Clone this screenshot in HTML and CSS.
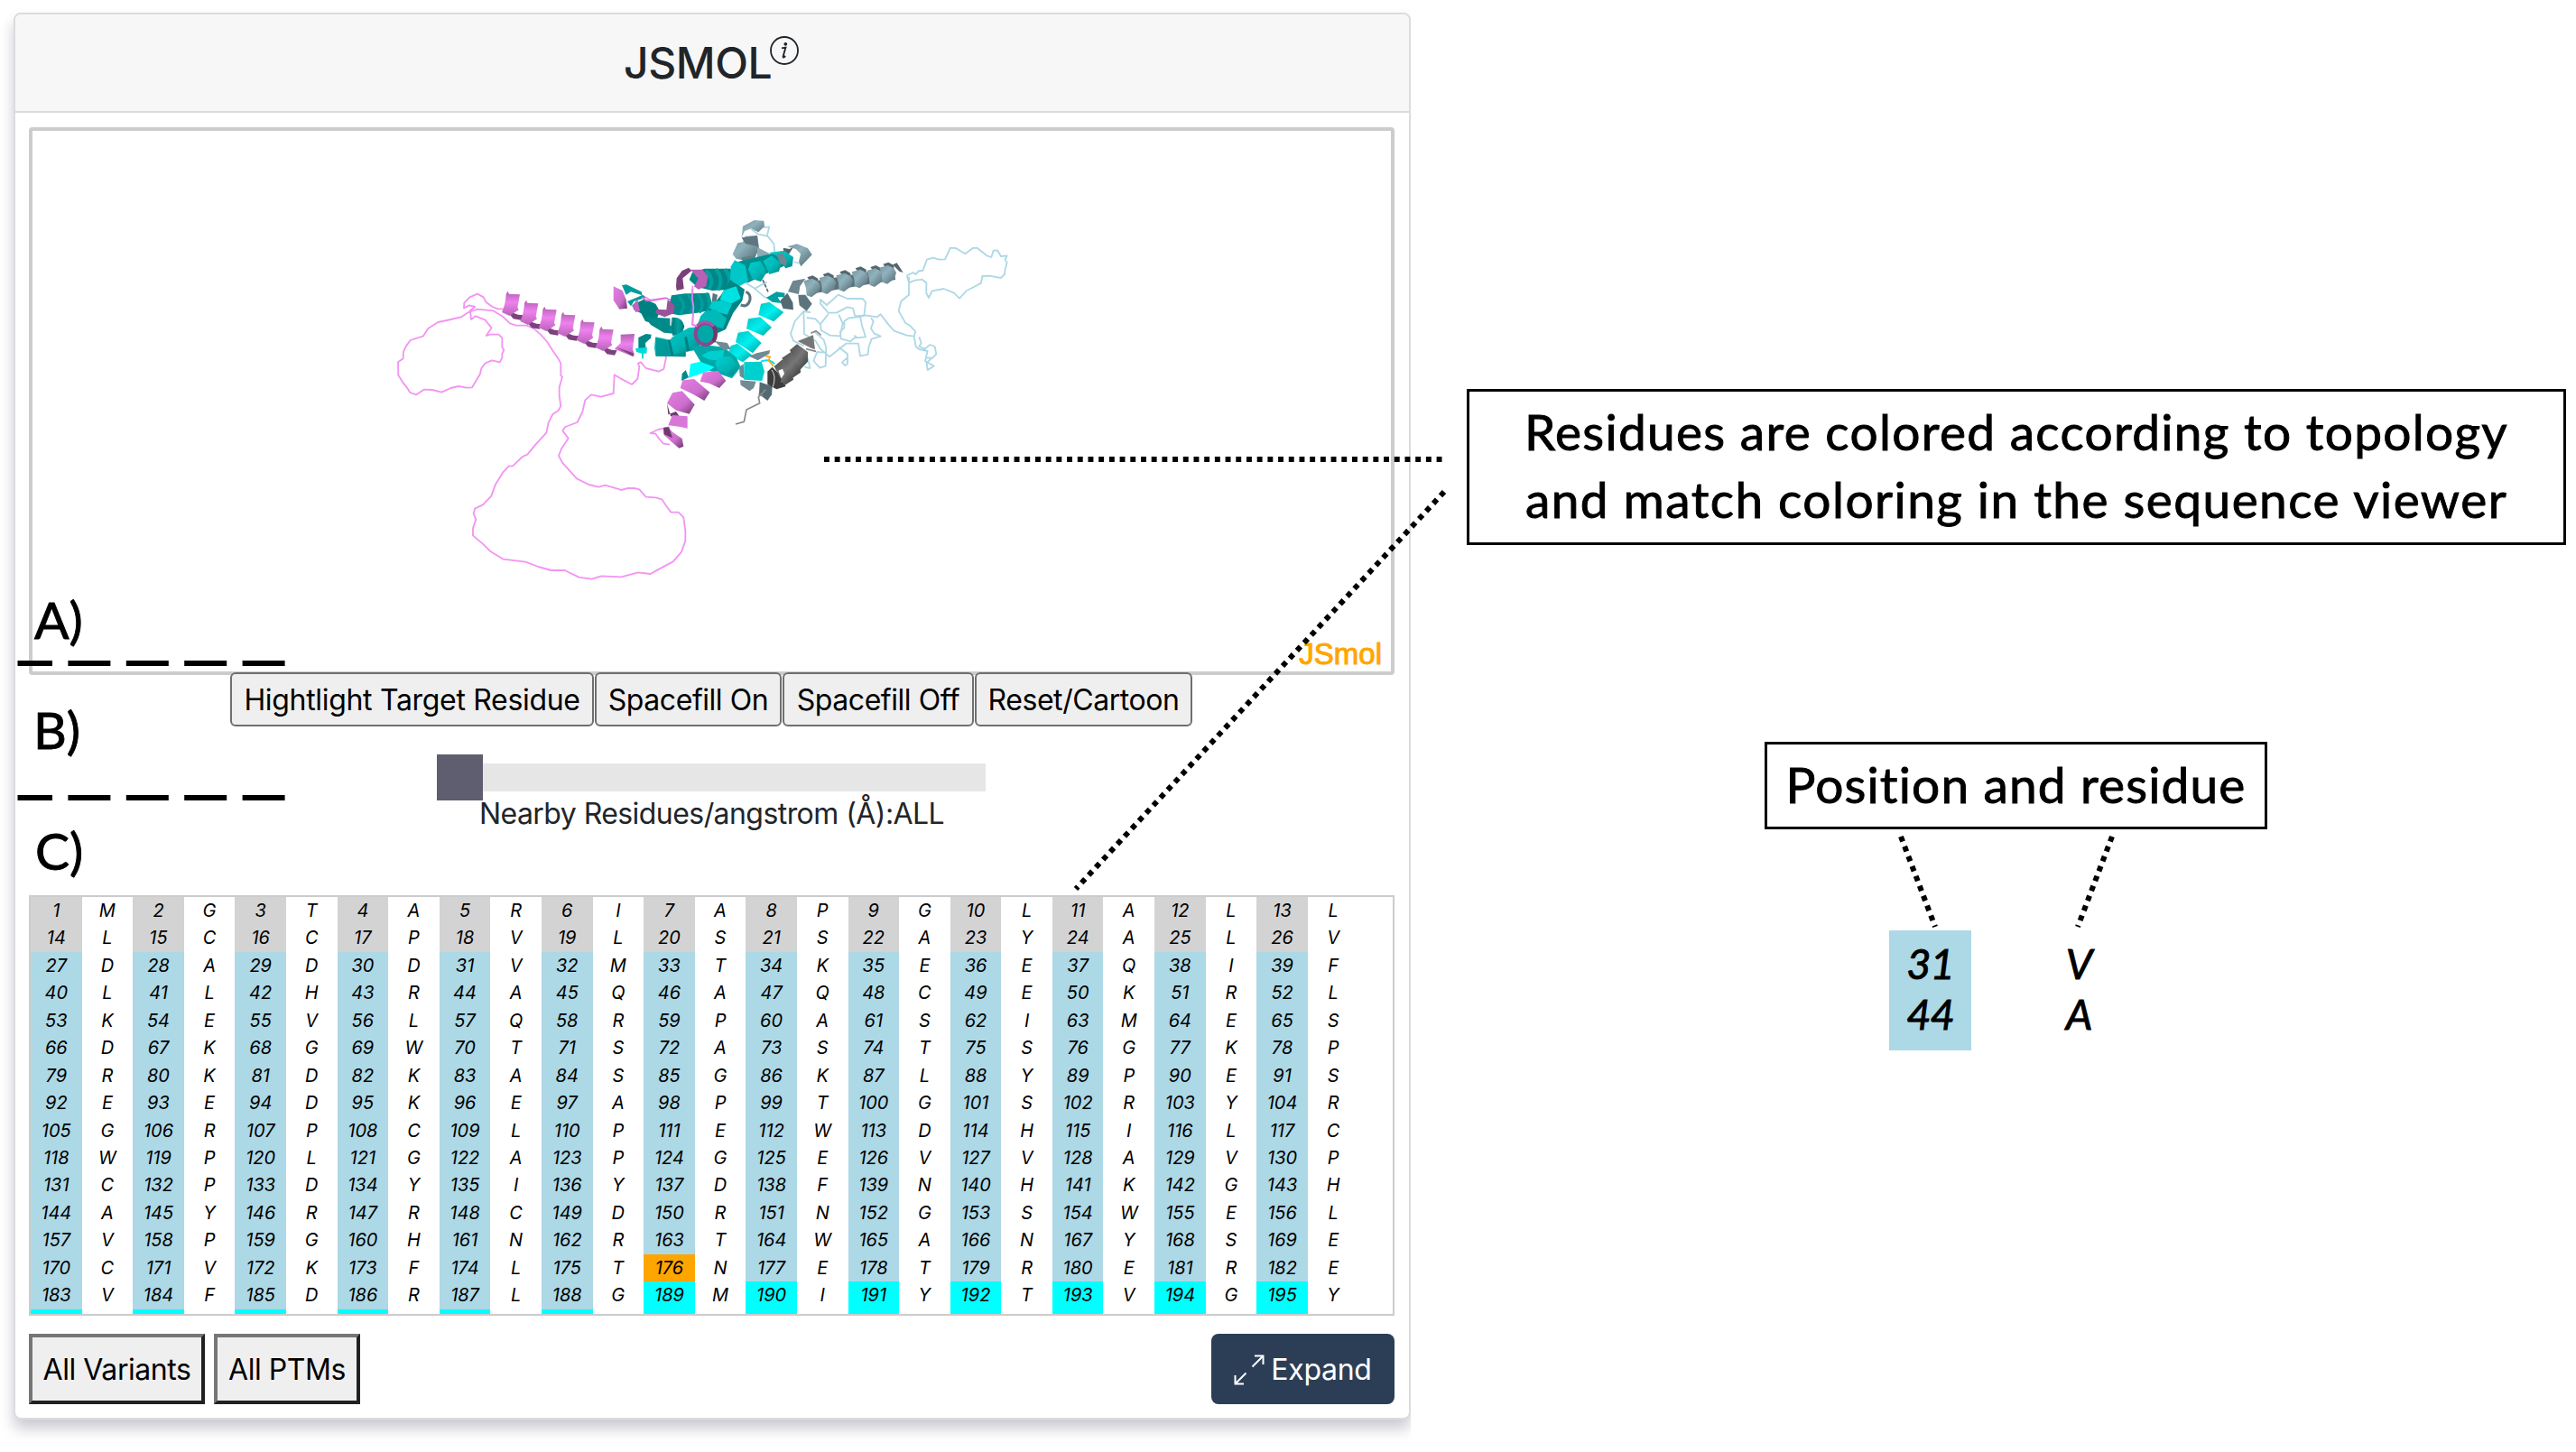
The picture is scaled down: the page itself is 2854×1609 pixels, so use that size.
FILE: index.html
```html
<!DOCTYPE html>
<html lang="en">
<head>
<meta charset="utf-8">
<title>JSMOL viewer</title>
<link rel="stylesheet" href="styles.css">
</head>
<body>
<main class="figure">
  <div class="panel-wrap">
    <section class="card">
      <header class="card-header">
        <h1 class="title">JSMOL</h1>
        <svg class="info" viewBox="0 0 32 32"><circle cx="16" cy="16" r="15" fill="none" stroke="#212529" stroke-width="1.8"/><circle cx="17.3" cy="8.8" r="1.9" fill="#212529"/><path d="M13 13.4 L17.4 12.6 L14.6 22.6 Q14.4 24 15.6 23.4 L17.2 22" fill="none" stroke="#212529" stroke-width="1.9"/></svg>
      </header>
      <div class="card-body">
        <div class="viewer">
          <svg class="molecule" viewBox="37 145 1504 599">
            <defs>
              <linearGradient id="pk" x1="0" y1="0" x2="0" y2="1"><stop offset="0" stop-color="#b25fb2"/><stop offset=".45" stop-color="#ee82ee"/><stop offset="1" stop-color="#b862b8"/></linearGradient>
              <linearGradient id="pd" x1="0" y1="0" x2="1" y2="1"><stop offset="0" stop-color="#e67de6"/><stop offset=".6" stop-color="#cc6ecc"/><stop offset="1" stop-color="#6e3a6e"/></linearGradient>
              <linearGradient id="cy" x1="0" y1="0" x2="1" y2="1"><stop offset="0" stop-color="#00c4c4"/><stop offset=".5" stop-color="#00f0f0"/><stop offset="1" stop-color="#009c9c"/></linearGradient>
              <linearGradient id="tm" x1="0" y1="0" x2="1" y2="1"><stop offset="0" stop-color="#00d0d0"/><stop offset=".6" stop-color="#00b4b4"/><stop offset="1" stop-color="#007c7c"/></linearGradient>
              <linearGradient id="td" x1="0" y1="0" x2="1" y2="0"><stop offset="0" stop-color="#007878"/><stop offset=".5" stop-color="#00a2a2"/><stop offset="1" stop-color="#007474"/></linearGradient>
              <linearGradient id="sl" x1="0" y1="0" x2="1" y2="1"><stop offset="0" stop-color="#7a969f"/><stop offset=".4" stop-color="#8fb2bd"/><stop offset="1" stop-color="#52666d"/></linearGradient>
              <linearGradient id="gr" x1="0" y1="0" x2="1" y2="1"><stop offset="0" stop-color="#4a4a4a"/><stop offset=".5" stop-color="#777"/><stop offset="1" stop-color="#383838"/></linearGradient>
              <g id="turn"><path d="M2 58 L40 72 L58 74 L50 90 L24 86Z" fill="#7c427c"/><path d="M0 3 L6 -6 L10 3 L46 5 L38 48 L42 56 L12 76 L-14 64 Q-2 40 0 3Z" fill="url(#pk)"/></g>
              <g id="coil"><path d="M8 -8 L26 -14 L44 -4 L44 16 L20 8Z" fill="#53676e"/><path d="M-4 4 L24 -4 L44 6 L52 20 L46 40 L22 58 L6 52 L4 28Z" fill="url(#sl)"/></g>
            </defs>
            <g class="strand violet" transform="translate(420 220) scale(.33333)">
              <path d="M422 367H398L380 360L358 344L350 328L330 317L304 328L286 347L285 364L303 355L322 360L306 372L309 402L324 391L355 403L377 430L359 456L372 452H400L412 463V494L418 504L412 516V530L404 544L378 538L355 548L343 565L338 585L312 628L293 629L267 624L241 630L211 644L180 636L152 635L127 652L106 645L96 629L83 613L67 587L66 544L83 532L84 509L93 490L107 471L150 457L166 432L199 411L228 405L276 394L300 378L330 368L382 373L415 393L438 415L458 422H493L515 431L540 452L562 477L581 507L600 535L607 548V588L612 593L602 628V655L607 690L598 706L580 717L566 745L559 779L523 818L496 851L480 858L447 889L434 890L414 911L390 950L376 989L348 1018L322 1030L317 1048L325 1067L315 1096V1120L350 1150L372 1172L416 1199L490 1208L532 1224L575 1236H620L667 1259L710 1265L742 1255L808 1258L864 1243L905 1248L928 1235L980 1207L1008 1175L1021 1138V1105L1015 1060L998 1043H973L956 1020L943 1000L922 994L890 992L868 967L850 963H830L808 969L755 953L732 959L700 951L660 931L612 878L600 855L610 830L632 797L613 772L622 759L662 744L679 709L688 670L708 652L740 659L782 648L785 586L805 598L843 618L862 600L868 560L864 548L873 544L890 564L932 575L949 567L957 528L948 508"/>
              <path d="M1045 290V340L1048 365L1044 420L1060 424M870 330L882 325L910 340L955 332M968 760L930 768L905 780L922 782L935 800L948 815L970 818"/>
              <g stroke="none"><use href="#turn" x="425" y="314"/><use href="#turn" x="486" y="344"/><use href="#turn" x="547" y="365"/><use href="#turn" x="609" y="383"/><use href="#turn" x="673" y="407"/><use href="#turn" x="736" y="431"/></g><path d="M806 452L852 450L846 500L852 520L845 524L785 500L806 480Z" fill="url(#pk)" stroke="none"/><path d="M790 494L848 514V526L826 512Z" fill="#7c427c" stroke="none"/>
            </g>
            <g class="strand pale" transform="translate(860 230) scale(.33333)">
              <path d="M437 226L458 216L466 222L478 210H490L504 173L524 167L544 173L564 172L582 134L600 135L631 154L656 135L671 134L703 160L718 165L725 143L738 142L750 162L770 160L764 172L770 184L764 204L762 222L749 234L712 227L688 228L684 251L660 264L636 276L612 302L594 284L560 270L521 277L510 300L502 285V250L488 239L464 242L444 250L437 226M444 230V290L418 311L410 344L432 383L449 394L466 412L461 428L437 425L395 410L376 389L357 364L350 355L338 364L300 358L265 361L258 335L239 331L203 350H176L150 320V306L171 324L209 290L240 303H291L300 316L295 360L282 362L288 392L300 430L262 434L250 445L218 436L216 412L229 400V378L245 367L282 363M461 428L467 462L478 471L506 477L498 510L527 527L506 540L503 517L520 500H500M478 430L485 450L478 462L497 470L514 456L530 462L535 487L520 502M318 367L326 378L318 402L328 418L350 428L320 437L310 465L308 488L282 494L276 452H235L180 496L150 470L135 445L96 420L94 345L115 348L94 345L65 378L51 419L60 443L95 460M104 366L133 370L150 388L152 408L182 425L215 427L224 385L211 356M152 385L176 354M130 413L161 440L169 465L167 527L148 533L127 510L139 480L162 482M211 464L240 487V520L232 525L222 515L238 500M262 425L272 433M108 500L115 534L97 530"/>
            </g>
            <g class="strand pale" transform="translate(640 230) scale(.33333)"><path d="M580 72L602 88L632 95L640 64L620 66M632 92L655 120L658 150M560 250L590 268L625 298L645 300M590 270L632 248M740 186L722 180"/></g>
            <g transform="translate(640 230) scale(.33333)">
              <path d="M548 100L552 62L590 42L622 44L624 62L604 82L580 70L558 78Z" fill="url(#sl)"/>
              <path d="M560 95L600 92L606 135L586 182L530 170L518 155L535 118L552 115Z" fill="url(#sl)"/>
              <path d="M548 100L600 94L604 130L560 120Z" fill="#5f7780"/>
              <path d="M600 132L640 152L628 170L600 175Z" fill="#8baab4"/><path d="M548 166L590 160L585 186L552 182Z" fill="#657d85"/>
              <path d="M686 134L708 138L722 128L702 160L688 150Z" fill="#536369"/><path d="M700 130L732 121L768 135L782 157L745 196L738 180L744 154L728 138Z" fill="url(#sl)"/>
              <path d="M545 324Q568 334 576 306Q578 286 562 280" fill="none" stroke="#5e757d" stroke-width="9"/>
              <path d="M618 240L636 280" stroke="#53676e" stroke-width="5" stroke-dasharray="12 4"/>
              <path d="M536 180L660 150L700 190L620 224L570 250L520 240Z" fill="#008f8f"/>
              <path d="M425 203H512L522 272L450 276L400 264L374 240L384 216Z" fill="#008686"/>
              <path d="M430 210Q460 240 440 270M462 205Q490 235 470 274M492 205Q520 235 500 270" stroke="#00a0a0" stroke-width="12" fill="none"/>
              <path d="M315 292L360 286L440 284L455 340L400 350L340 358L300 350Z" fill="#008c8c"/>
              <path d="M340 296Q368 325 344 354M370 290Q398 320 376 350M402 286Q430 320 408 350M430 284Q450 310 434 348" stroke="#009e9e" stroke-width="9" fill="none"/>
              <path d="M452 284L468 290L460 330L448 326Z" fill="#5e757d"/>
              <path d="M150 258L165 256L215 280L218 292L180 280L164 290Z" fill="#009c9c"/>
              <path d="M168 312L220 290L228 300L190 312L180 328Z" fill="#009c9c"/>
              <path d="M184 324L226 304L262 320L276 345L260 386L228 378L214 352L190 340Z" fill="#008181"/>
              <path d="M226 364L312 368L330 420L290 416L246 390Z" fill="#008a8a"/><path d="M316 366Q350 362 358 395L348 425H318Z" fill="url(#td)"/><path d="M312 368V392" stroke="#fff" stroke-width="4"/>
              <path d="M205 432L230 420L248 422L246 434L228 450L230 475L205 470Z" fill="#008787"/><path d="M195 468L234 464L232 485H222V502H216V485L198 480Z" fill="#00dada"/>
              <path d="M262 430L310 440L318 430L372 400L410 396L410 470L362 480V496L262 494L258 465Z" fill="url(#tm)"/><path d="M262 432L300 440L312 492L362 480V496L264 494Z" fill="#008c8c" opacity=".7"/><path d="M306 440L318 492M362 430L370 478" stroke="#008080" stroke-width="9"/>
              <path d="M525 175L560 192L570 245L540 262L510 240L512 196Z" fill="#00c8c8"/>
              <path d="M578 184L610 178L632 214L612 246L584 238L570 205Z" fill="url(#tm)"/>
              <path d="M620 178L648 160L680 186L672 212L640 222Z" fill="url(#tm)"/>
              <path d="M638 150L690 143L720 165L716 195L694 202L664 160Z" fill="url(#tm)"/><path d="M664 155L684 152L698 174L696 194L676 186Z" fill="#6e8790"/>
              <path d="M510 240L558 272L550 310L520 350L495 405L440 430L392 400L430 350L480 290Z" fill="#008585"/>
              <path d="M488 275L530 262L545 302L512 320L476 306Z" fill="#00e2e2"/>
              <path d="M450 312L482 308L516 322L500 356L462 346L440 334Z" fill="#00cdcd"/><path d="M428 344L460 338L498 368L486 402L462 396L402 388L412 360Z" fill="#00b9b9"/>
              <path d="M630 300L664 280L692 284L690 298L668 298L680 318L650 314Z" fill="#00a0a0"/>
              <path d="M612 320L640 314L688 348L655 379L604 357Z" fill="url(#cy)"/>
              <path d="M570 370L610 364L648 398L620 426L564 403Z" fill="url(#cy)"/>
              <path d="M536 416L570 410L614 450L585 484L528 447Z" fill="url(#cy)"/>
              <path d="M512 460L534 452L582 490L552 514L502 488Z" fill="url(#cy)"/>
              <path d="M380 460L440 458L488 464L530 498L545 530L516 568L462 548L430 540L410 510Z" fill="#00a8a8"/>
              <path d="M440 478L490 474L484 510L438 505L414 492Z" fill="#00cfcf"/><path d="M474 496L512 495L538 528L516 560L468 540L460 516Z" fill="url(#tm)"/>
              <path d="M378 520L410 512L458 530L438 544L372 566Z" fill="#0ff"/><path d="M362 540L372 565L348 576L350 552Z" fill="#008b8b"/>
              <path d="M458 444L500 450L512 470L488 474Z" fill="#718b94"/>
              <path d="M572 494L598 484L642 474L640 486L602 508Z" fill="#718b94"/><path d="M543 574L596 578L588 600L574 610L545 590Z" fill="#718b94"/><path d="M608 580L650 595L648 622L634 642L606 620Z" fill="#536a72"/><path d="M540 530L554 520L558 570L542 560Z" fill="#609098"/>
              <path d="M556 514L614 512L624 545L616 576L556 572Z" fill="#00cfcf"/><path d="M612 512Q640 500 658 520" stroke="#0df" fill="none" stroke-width="6"/><path d="M628 494L642 496L638 508L654 528" stroke="#ffa500" fill="none" stroke-width="5"/>
              <path d="M330 262L332 235L350 210L372 200L382 210L352 235L356 270L332 276Z" fill="#7b407b"/><path d="M378 206L418 206L436 228L430 262L404 272L390 262L404 236Z" fill="#b660b6"/>
              <path d="M122 262L152 276L164 306L168 335L142 338L122 308Z" fill="url(#pd)"/><path d="M184 326L202 306L210 344L196 348Z" fill="#bd64bd"/><path d="M302 306L326 326L322 352L292 364L262 352L264 338L298 340Z" fill="#9a529a"/><path d="M216 298L232 310L296 300L312 308" fill="none" stroke="#d873d8" stroke-width="5"/>
              <ellipse cx="428" cy="420" rx="33" ry="36" fill="#00a8a8" stroke="#8b478b" stroke-width="12"/><path d="M400 392Q428 368 456 394" fill="none" stroke="#a555a5" stroke-width="9"/><path d="M456 394Q468 420 454 446" fill="none" stroke="#6e3a6e" stroke-width="13"/>
              <path d="M384 270V306L388 330L385 388L400 395" fill="none" stroke="#ee82ee" stroke-width="5"/>
              <path d="M420 548L470 542L496 576L474 600L440 584L410 578Z" fill="url(#pd)"/><path d="M352 574L390 570L442 614L424 642L386 620L344 600Z" fill="url(#pd)"/><path d="M318 616L350 610L392 655L374 686L330 674L300 650Z" fill="url(#pd)"/><path d="M300 650L304 688L330 678L345 700L312 694Z" fill="#6e3a6e"/><path d="M318 690L368 694V734L340 728L304 724Z" fill="#d877d8"/><path d="M288 732L302 728L320 748L350 768L355 794L340 800L312 776L290 756Z" fill="url(#pd)"/><path d="M288 732L306 730L318 766L290 754Z" fill="#6e3a6e"/>
              <path d="M634 545L650 530L688 570L694 595L664 604L634 588Z" fill="#3d3d3d"/><path d="M648 540Q664 560 652 596M674 530Q700 550 680 580" stroke="#ddd" stroke-width="3" fill="none"/>
              <path d="M656 528L684 505L714 540L720 572L690 592Z" fill="url(#gr)"/><path d="M682 500L712 480L742 512L744 548L718 566Z" fill="url(#gr)"/><path d="M708 474L732 454L768 480V512L742 540Z" fill="url(#gr)"/><path d="M734 444L786 424L792 472L776 466Z" fill="#777"/><path d="M670 542L684 536L690 552L680 568Z" fill="#fff"/>
              <path d="M778 418L795 410L812 424M762 470L795 478M628 605L604 630L608 650L564 672L556 712L528 720M604 620L620 628" stroke="#888" fill="none" stroke-width="5"/>
              <path d="M676 310L700 284L718 316L720 340L686 336Z" fill="#536a72"/><path d="M736 290L760 290L782 320L764 344L740 325Z" fill="#5c747c"/><path d="M702 280L718 244L760 236L742 262L738 288Z" fill="#6d868f"/>
            </g>
            <g transform="translate(860 230) scale(.33333)"><path d="M110 268L396 220" stroke="#5b727a" stroke-width="40"/><use href="#coil" x="98" y="240"/><use href="#coil" x="150" y="230"/><use href="#coil" x="206" y="222"/><use href="#coil" x="258" y="210"/><use href="#coil" x="308" y="206"/><use href="#coil" x="350" y="196"/><path d="M390 190L404 184L425 216L412 212Z" fill="#53676e"/></g>
          </svg>
          <span class="jsmol">JSmol</span>
        </div>
        <div class="controls">
          <button class="ctl c1">Hightlight Target Residue</button><button class="ctl c2">Spacefill On</button><button class="ctl c3">Spacefill Off</button><button class="ctl c4">Reset/Cartoon</button>
        </div>
        <div class="slider"><div class="thumb"></div><div class="track"></div></div>
        <div class="slider-label">Nearby Residues/angstrom (Å):ALL</div>
        <div class="sequence" id="sequence"></div>
        <footer class="actions">
          <button class="raised r1">All Variants</button>
          <button class="raised r2">All PTMs</button>
          <button class="expand"><svg viewBox="0 0 34 34"><path d="M23 1.5H32.5V11M32.5 1.5L20.5 13.5M1.5 23V32.5H11M1.5 32.5L13.5 20.5" fill="none" stroke="#fff" stroke-width="2"/></svg><span>Expand</span></button>
        </footer>
      </div>
    </section>
  </div>
  <aside class="notes">
    <div class="note topology"><span class="line1">Residues are colored according to topology</span><span class="line2">and match coloring in the sequence viewer</span></div>
    <div class="note position"><span>Position and residue</span></div>
    <div class="sample"><div class="nums"><i>31</i><i>44</i></div><div class="letters"><i>V</i><i>A</i></div></div>
  </aside>
  <svg class="leaders" viewBox="0 0 2854 1609" fill="none" stroke="#000" stroke-width="6">
    <g stroke-dasharray="5.9 5.8"><path d="M913 509H1600M1600 545L1192 985M2106 927L2144 1027M2340 927L2302 1027"/></g>
    <g stroke-dasharray="47 17.4" stroke-dashoffset="8.5"><path d="M19.5 735H316M19.5 884H316"/></g>
  </svg>
  <span class="marker a">A)</span><span class="marker b">B)</span><span class="marker c">C)</span>
</main>
<script src="script.js"></script>
</body>
</html>
```
FILE: styles.css
```css
* { box-sizing: border-box; }
body { margin: 0; background: #fff; font-family: Inter, "Liberation Sans", sans-serif; color: #212529; }
.figure { position: relative; display: flex; width: 2854px; height: 1609px; overflow: hidden; }
.panel-wrap { width: 1563px; height: 1609px; padding: 14px 0 0 15px; overflow: hidden; flex: none; }
.card { width: 1548px; height: 1559px; border: 2px solid #dcdcdf; border-radius: 8px; background: #fff; box-shadow: 0 10px 16px 0 #c9c9d2; }
.card-header { height: 109px; background: #f7f7f7; border-bottom: 2px solid #dcdcdc; border-radius: 6px 6px 0 0; display: flex; align-items: center; padding-left: 674px; }
.title { margin: 0; font-size: 48px; font-weight: 500; line-height: 58px; letter-spacing: -0.4px; white-space: nowrap; width: 162px; }
.info { width: 32px; height: 32px; margin-bottom: 27px; }
.card-body { padding: 16px 16px 0 15px; }
.viewer { position: relative; height: 607px; width: 1513px; border: 4px solid #ccc; border-radius: 4px; }
.molecule { display: block; width: 1504px; height: 599px; }
.strand { fill: none; stroke-width: 5.5; stroke-linejoin: round; }
.violet { stroke: #f394f3; }
.pale { stroke: #add8e6; }
.jsmol { position: absolute; right: 10px; bottom: 0; font: 33px/38px "Liberation Sans", Arial, sans-serif; color: #ffa500; -webkit-text-stroke: 1px #ffa500; }
.controls { display: flex; gap: 1px; margin: -3px 0 0 223px; position: relative; }
button { font-family: inherit; font-size: 32px; line-height: 38px; letter-spacing: -0.45px; color: #000; padding: 2px 0 0; margin: 0; white-space: nowrap; display: flex; align-items: center; justify-content: center; }
.ctl { height: 60px; background: #efefef; border: 2px solid #6f6f6f; border-radius: 6px; }
.c1 { width: 403px; letter-spacing: -0.32px; } .c2 { width: 207px; } .c3 { width: 212px; } .c4 { width: 241px; }
.slider { display: flex; align-items: center; margin: 31px 0 0 452px; height: 51px; }
.thumb { width: 51px; height: 51px; background: #5e5e70; }
.track { width: 557px; height: 31px; background: #e6e6e6; }
.slider-label { margin: -4px 0 71px 499px; height: 38px; font-size: 32px; line-height: 38px; letter-spacing: -0.56px; white-space: nowrap; }
.sequence { width: 1513px; height: 466px; border: 2px solid #ccc; overflow: hidden; display: grid; grid-template-columns: repeat(26, 56.6px); grid-auto-rows: 30.45px; font-size: 20px; font-style: italic; line-height: 31.6px; text-align: center; color: #000; }
.signal { background: #d3d3d3; }
.outer { background: #add8e6; }
.membrane { background: #0ff; }
.target { background: orange; }
.actions { display: flex; gap: 10px; margin-top: 20px; height: 78px; }
.raised { background: #efefef; border: 4px solid; border-color: #767676 #212121 #212121 #767676; }
.r1 { width: 195px; } .r2 { width: 162px; }
.expand { margin-left: auto; width: 203px; background: #2c3e55; border: 0; border-radius: 8px; color: #fff; gap: 7px; letter-spacing: -0.3px; }
.expand svg { width: 34px; height: 34px; }
.notes { flex: 1; padding-top: 431px; color: #000; font-family: Lato, Carlito, sans-serif; font-size: 55px; line-height: 74.5px; -webkit-text-stroke: 0.9px #000; }
.note { border: 3px solid #000; display: flex; flex-direction: column; align-items: center; white-space: nowrap; }
.topology { margin-left: 62px; width: 1218px; height: 173px; padding-top: 7px; }
.line1 { letter-spacing: 1.3px; }
.line2 { letter-spacing: 1.45px; }
.position { margin: 218px 0 0 392px; width: 557px; height: 97px; padding-top: 7px; letter-spacing: 1.15px; }
.sample { display: flex; margin: 112px 0 0 530px; font-size: 47px; line-height: 55.5px; text-align: center; }
.nums, .letters { display: flex; flex-direction: column; padding-top: 9px; width: 91px; height: 133px; }
.nums { background: #add8e6; letter-spacing: -1px; }
.letters { margin-left: 74px; }
.leaders { position: absolute; inset: 0; width: 2854px; height: 1609px; }
.marker { position: absolute; left: 38px; font: 57px/68px Lato, Carlito, sans-serif; color: #000; -webkit-text-stroke: 0.9px #000; }
.a { top: 652px; } .b { top: 774px; left: 37px; } .c { top: 908px; left: 39px; }
```
FILE: script.js
```js
const residues = "MGTARIAPGLALLLCCPVLSSAYALVDADDVMTKEEQIFLLHRAQAQCEKRLKEVLQRPASIMESDKGWTSASTSGKPRKDKASGKLYPESEEDKEAPTGSRYRGRPCLPEWDHILCWPLGAPGEVVAVPCPDYIYDFNHKGHAYRRCDRNGSWELVPGHNRTWANYSECVKFLTNETREREVFDRLGMIYTVGY";
const grid = document.getElementById("sequence");
const region = n => n === 176 ? "target" : n <= 26 ? "signal" : n <= 188 ? "outer" : "membrane";
for (let n = 1; n <= 208; n++) {
  const pos = document.createElement("span");
  pos.className = region(n);
  const res = document.createElement("span");
  if (n <= residues.length) { pos.textContent = n; res.textContent = residues[n - 1]; }
  grid.append(pos, res);
}
```
